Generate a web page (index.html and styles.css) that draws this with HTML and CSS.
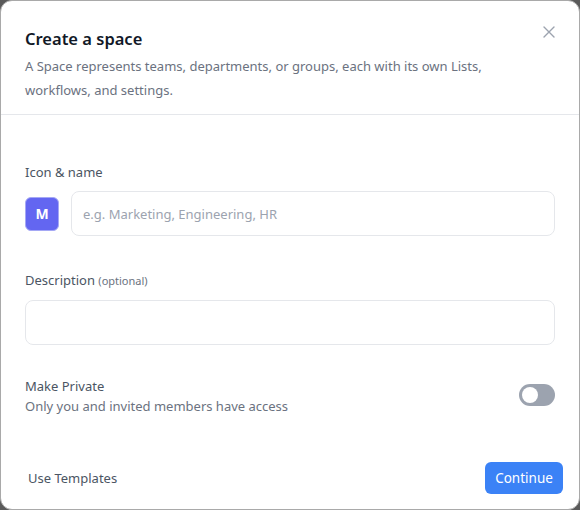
FILE: index.html
```html
<!DOCTYPE html>
<html>
<head>
<meta charset="utf-8">
<link rel="stylesheet" href="styles.css">
</head>
<body>
<div class="modal">
  <div class="header">
    <h1 class="title">Create a space</h1>
    <p class="subtitle">A Space represents teams, departments, or groups, each with its own Lists, workflows, and settings.</p>
    <button class="close" aria-label="Close">
      <svg width="12" height="12" viewBox="0 0 12 12"><path d="M1 1L11 11M11 1L1 11" stroke="#9ca3af" stroke-width="1.4" stroke-linecap="round"/></svg>
    </button>
  </div>
  <div class="body">
    <div class="label">Icon &amp; name</div>
    <div class="name-row">
      <div class="avatar">M</div>
      <div class="input"><span class="placeholder">e.g. Marketing, Engineering, HR</span></div>
    </div>
    <div class="label label-desc">Description <span class="optional">(optional)</span></div>
    <div class="input input-full"></div>
    <div class="private-row">
      <div class="private-text">
        <div class="private-title">Make Private</div>
        <div class="private-sub">Only you and invited members have access</div>
      </div>
      <div class="toggle"><span class="knob"></span></div>
    </div>
  </div>
  <div class="footer">
    <button class="ghost">Use Templates</button>
    <button class="primary">Continue</button>
  </div>
</div>
</body>
</html>
```
FILE: styles.css
```css
* { box-sizing: border-box; }
html, body { margin: 0; padding: 0; }
body {
  background: #5a5a5a;
  font-family: "Noto Sans", "Liberation Sans", sans-serif;
  width: 580px;
  height: 510px;
}
.modal {
  width: 580px;
  height: 510px;
  background: #fff;
  border: 1px solid #a9a9a9;
  border-radius: 12px;
  display: flex;
  flex-direction: column;
  overflow: hidden;
}
.header {
  position: relative;
  padding: 24px 24px 12px;
  border-bottom: 1px solid #e5e7eb;
}
.title {
  margin: 0;
  font-size: 16.5px;
  line-height: 28px;
  font-weight: 600;
  color: #111827;
}
.subtitle {
  margin: 1px 0 0;
  font-size: 13px;
  line-height: 24px;
  color: #6b7280;
  max-width: 475px;
}
.close {
  position: absolute;
  top: 24px;
  right: 18px;
  width: 24px;
  height: 14px;
  padding: 0;
  border: 0;
  background: none;
  display: flex;
  align-items: center;
  justify-content: center;
}
.body {
  padding: 47px 24px 0;
}
.label {
  font-size: 13px;
  line-height: 20px;
  color: #4b5563;
}
.label-desc { margin-top: 34px; }
.optional { font-size: 11px; color: #6b7280; }
.name-row {
  margin-top: 9px;
  display: flex;
  align-items: center;
  gap: 12px;
}
.avatar {
  width: 34px;
  height: 34px;
  flex: none;
  border-radius: 6px;
  background: #6366f1;
  border: 1px solid #a5a8f5;
  color: #fff;
  font-weight: 700;
  font-size: 14px;
  display: flex;
  align-items: center;
  justify-content: center;
}
.input {
  flex: 1;
  height: 45px;
  border: 1px solid #e5e7eb;
  border-radius: 8px;
  display: flex;
  align-items: center;
  padding: 0 11px;
}
.input-full { margin-top: 9px; }
.placeholder { font-size: 13px; color: #9ca3af; }
.private-row {
  margin-top: 31px;
  display: flex;
  align-items: flex-start;
  justify-content: space-between;
}
.private-title, .private-sub {
  font-size: 13px;
  line-height: 20px;
}
.private-title { color: #4b5563; }
.private-sub { color: #6b7280; }
.toggle {
  margin-top: 8px;
  width: 36px;
  height: 22px;
  border-radius: 11px;
  background: #9ca3af;
  padding: 3px;
  display: flex;
}
.knob {
  width: 16px;
  height: 16px;
  border-radius: 50%;
  background: #fff;
}
.footer {
  margin-top: auto;
  padding: 0 16px 15px 16px;
  display: flex;
  justify-content: space-between;
  align-items: center;
}
button { font-family: inherit; cursor: pointer; }
.ghost {
  border: 0;
  background: none;
  font-size: 13px;
  color: #4b5563;
  padding: 0 11px;
  height: 32px;
}
.primary {
  border: 0;
  background: #3b82f6;
  color: #fff;
  font-size: 13.5px;
  height: 32px;
  width: 78px;
  border-radius: 6px;
}
```
